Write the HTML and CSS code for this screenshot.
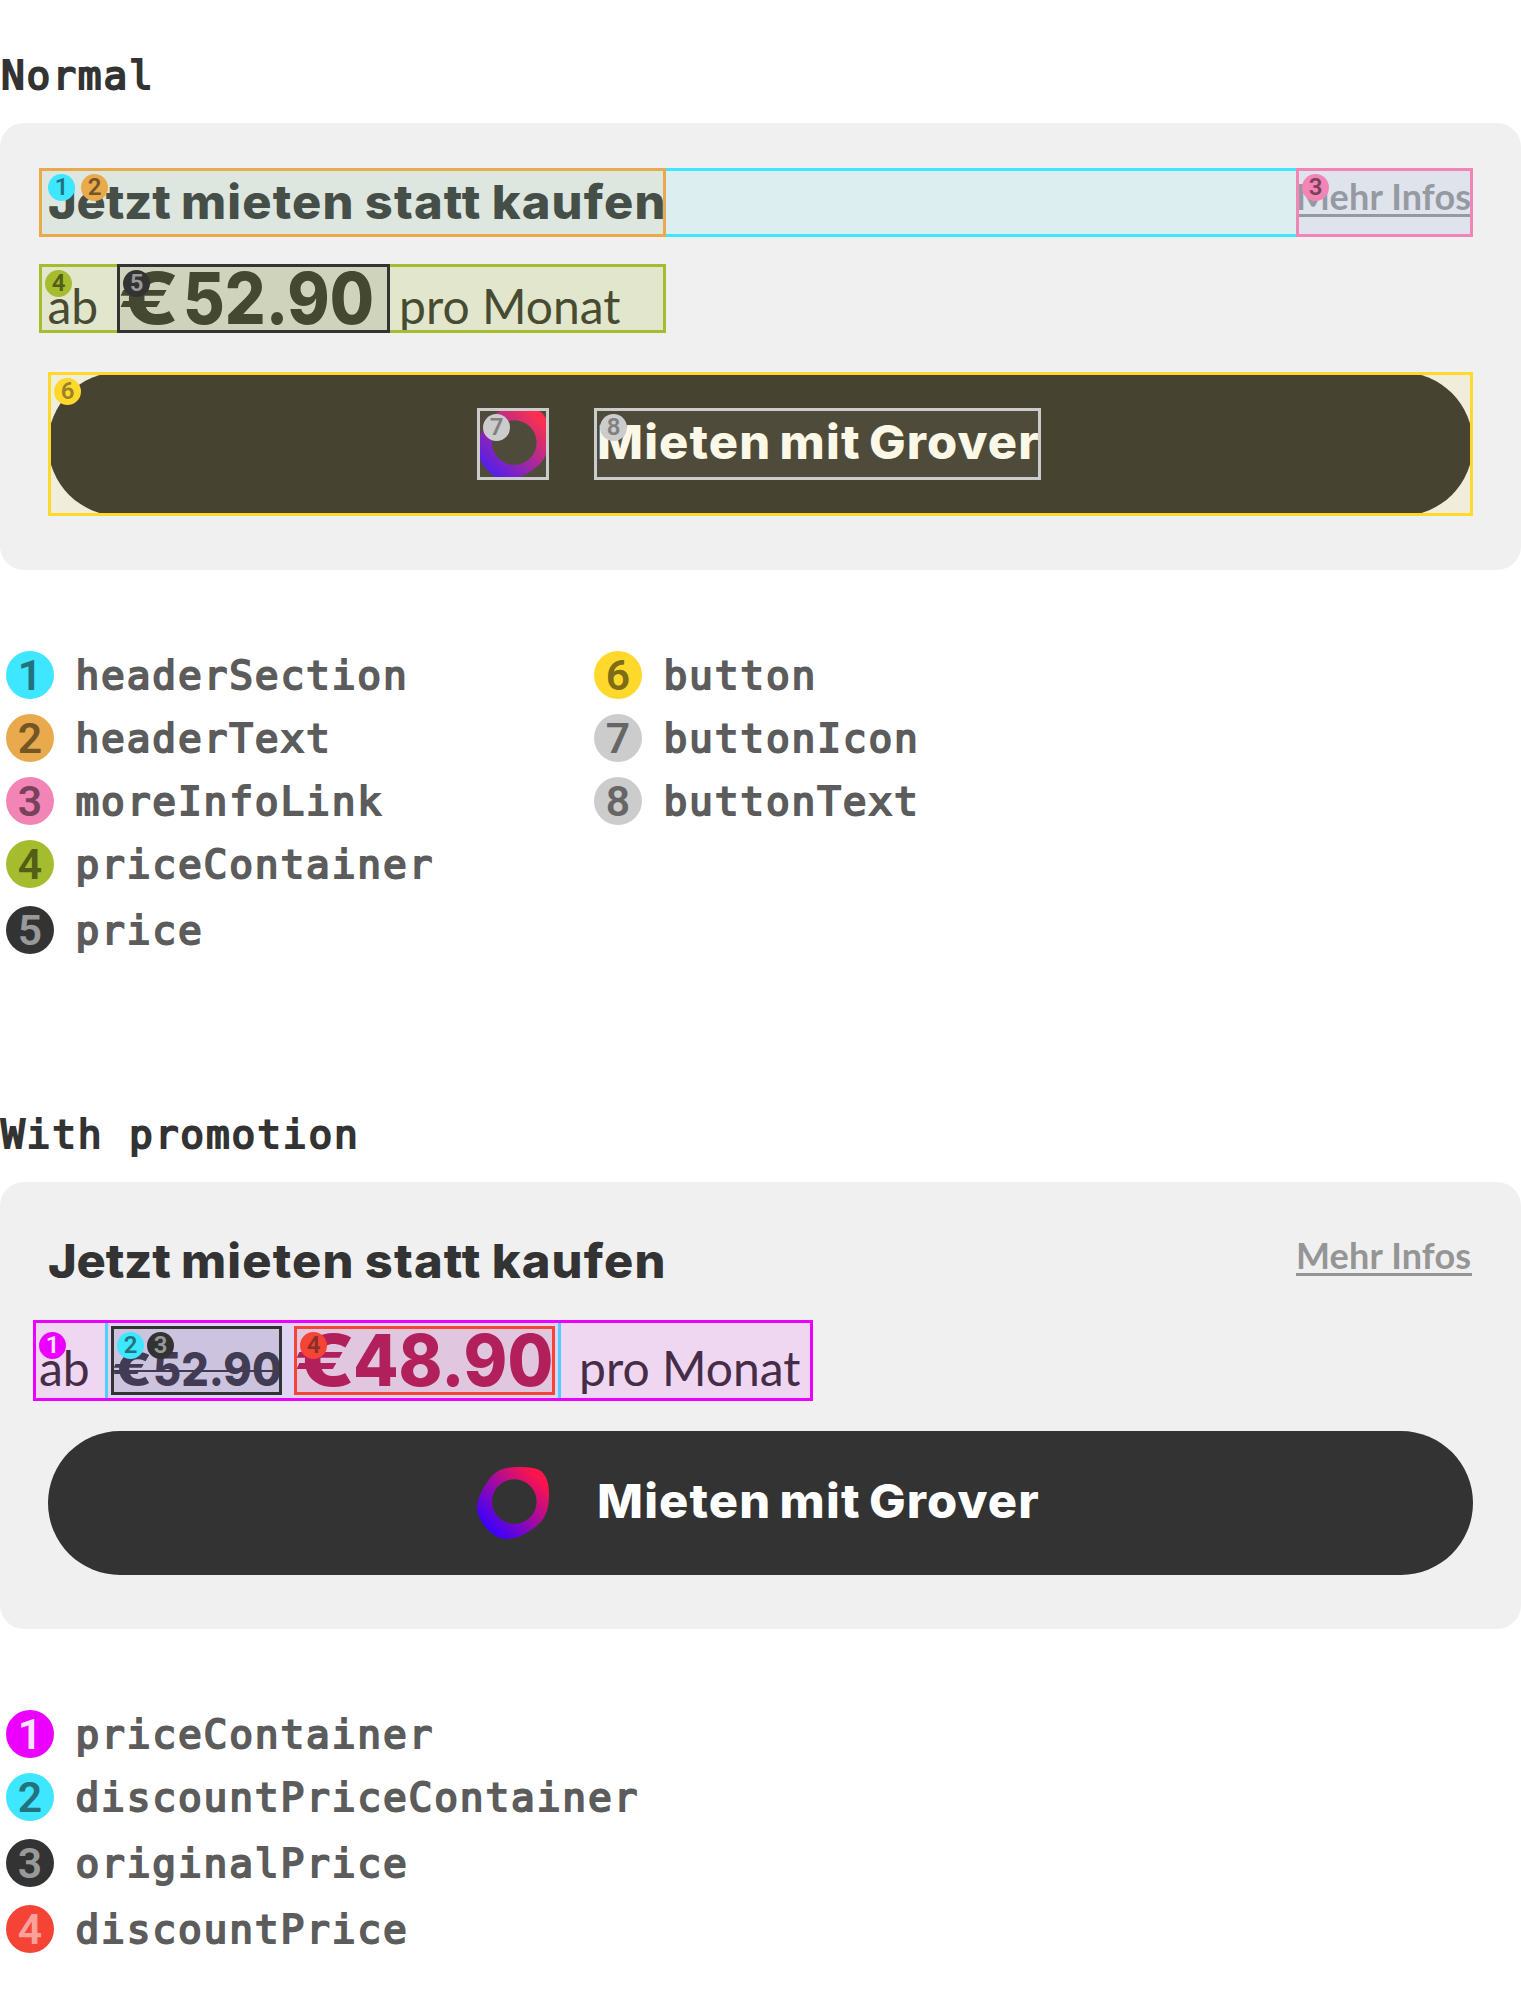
FILE: index.html
```html
<!DOCTYPE html>
<html lang="de">
<head>
<meta charset="utf-8">
<title>Grover widget</title>
<link rel="stylesheet" href="styles.css">
</head>
<body>
<svg class="defs" aria-hidden="true">
  <defs>
    <linearGradient id="ring" gradientUnits="userSpaceOnUse" x1="12" y1="62" x2="62" y2="10">
      <stop offset="0" stop-color="#3c00ff"/>
      <stop offset="1" stop-color="#ff144b"/>
    </linearGradient>
    <symbol id="logo" viewBox="0 0 72 72">
      <path fill="url(#ring)" fill-rule="evenodd" d="M42 0C53 0 60 1 64.500 4.500C70 9 72 18 72 27C72 38 70.500 46 65 53.500C58 62 43 72 30 72C19 72 11 64 5.500 56C1.500 50 0 46 0 40.500C0 33 4 25 8.500 17.500C17 4 24 0 42 0ZM37.300 12.300a22.300 22.300 0 1 0 0 44.600a22.300 22.300 0 1 0 0-44.600Z"/>
    </symbol>
  </defs>
</svg>

<section class="variant">
  <h2 class="title">Normal</h2>
  <div class="card">
    <div class="header">
      <div class="header-text"><span class="heading"><span class="tight">Jetzt</span> mieten statt kaufen</span><i class="mark orange over"></i><b class="badge orange second">2</b></div>
      <div class="more"><a class="more-link">Mehr Infos</a><i class="mark pink over"></i><b class="badge pink">3</b></div>
      <i class="mark cyan"></i><b class="badge cyan header-badge">1</b>
    </div>
    <div class="price-row">
      <span class="prefix">ab</span>
      <div class="price-box"><span class="price"><span class="euro">€</span><span class="amount">52.90</span></span><i class="mark dark over"></i><b class="badge dark">5</b></div>
      <span class="suffix">pro Monat</span>
      <i class="mark green"></i><b class="badge green">4</b>
    </div>
    <div class="button">
      <div class="button-icon"><svg class="logo"><use href="#logo"/></svg><i class="mark grey over"></i><b class="badge grey">7</b></div>
      <div class="button-text"><span class="label">Mieten mit Grover</span><i class="mark grey over"></i><b class="badge grey">8</b></div>
      <i class="mark yellow"></i><b class="badge yellow">6</b>
    </div>
  </div>
  <div class="legend">
    <ul class="keys">
      <li class="key"><b class="dot cyan">1</b><span class="name">headerSection</span></li>
      <li class="key"><b class="dot orange">2</b><span class="name">headerText</span></li>
      <li class="key"><b class="dot pink">3</b><span class="name">moreInfoLink</span></li>
      <li class="key"><b class="dot green">4</b><span class="name">priceContainer</span></li>
      <li class="key loose"><b class="dot dark">5</b><span class="name">price</span></li>
    </ul>
    <ul class="keys">
      <li class="key"><b class="dot yellow">6</b><span class="name">button</span></li>
      <li class="key"><b class="dot grey">7</b><span class="name">buttonIcon</span></li>
      <li class="key"><b class="dot grey">8</b><span class="name">buttonText</span></li>
    </ul>
  </div>
</section>

<section class="variant">
  <h2 class="title">With promotion</h2>
  <div class="card">
    <div class="header">
      <div class="header-text"><span class="heading"><span class="tight">Jetzt</span> mieten statt kaufen</span></div>
      <div class="more"><a class="more-link">Mehr Infos</a></div>
    </div>
    <div class="price-row promo">
      <span class="prefix">ab</span>
      <div class="discount">
        <div class="original-box"><span class="original"><span class="euro">€</span><span class="amount">52.90</span></span><i class="mark dark top"></i><b class="badge dark shifted">3</b></div>
        <div class="discount-box"><span class="price reduced"><span class="euro">€</span><span class="amount">48.90</span></span><i class="mark red top"></i><b class="badge red">4</b></div>
        <i class="mark cyan"></i><b class="badge cyan inner">2</b>
      </div>
      <span class="suffix">pro Monat</span>
      <i class="mark magenta over"></i><b class="badge magenta inner-left">1</b>
    </div>
    <div class="button">
      <div class="button-icon"><svg class="logo"><use href="#logo"/></svg></div>
      <div class="button-text"><span class="label">Mieten mit Grover</span></div>
    </div>
  </div>
  <div class="legend">
    <ul class="keys">
      <li class="key"><b class="dot magenta">1</b><span class="name">priceContainer</span></li>
      <li class="key"><b class="dot cyan">2</b><span class="name">discountPriceContainer</span></li>
      <li class="key loose"><b class="dot dark">3</b><span class="name">originalPrice</span></li>
      <li class="key loose"><b class="dot red">4</b><span class="name">discountPrice</span></li>
    </ul>
  </div>
</section>
</body>
</html>
```
FILE: styles.css
```css
* { box-sizing: border-box; }
body { margin: 0; background: #fff; color: #333; font-family: Lato, sans-serif; }
.defs { position: absolute; width: 0; height: 0; }
.variant { height: 1059px; }
.variant:last-child { height: 957px; overflow: hidden; }

.title, .name {
  margin: 0;
  font: 400 39.5px/46px "DejaVu Sans Mono", monospace;
  letter-spacing: 1.84px;
  -webkit-text-stroke: 2px currentColor;
  white-space: pre;
}
.title { padding: 52px 0 25px 1px; }

/* Widget card */
.card { height: 447px; padding: 45px 48px 0 39px; border-radius: 24px; background: #f0f0f0; }
.header { position: relative; display: flex; justify-content: space-between; height: 69px; }
.header-text { position: relative; width: 627px; padding-left: 9px; }
.heading, .label, .price, .original { display: block; font-family: Inter, sans-serif; white-space: nowrap; }
.heading, .label {
  font-size: 47px; font-weight: 800; letter-spacing: 1.1px; word-spacing: -3.5px;
  transform: scaleX(1.038); transform-origin: left;
}
.heading { line-height: 67px; word-spacing: -1.5px; }
.tight { letter-spacing: -.2px; }
.more { position: relative; width: 177px; }
.more-link {
  display: block; width: 176px; height: 49px; border-bottom: 3px solid #959595;
  color: #959595; font-size: 36px; font-weight: 700; line-height: 56px; letter-spacing: .15px; white-space: nowrap;
}

.price-row { position: relative; display: flex; width: 627px; height: 69px; margin-top: 27px; }
.prefix { width: 78px; padding-left: 8.500px; }
.prefix, .suffix { font-size: 48px; line-height: 83px; white-space: nowrap; }
.price-box { position: relative; width: 273px; padding-left: 1px; }
.price { font-size: 72px; font-weight: 800; line-height: 68px; }
.suffix { padding-left: 9px; }
.euro, .amount { display: inline-block; transform-origin: left; }
.euro { transform: scaleX(1.24); }
.amount { margin-left: 15px; transform: scaleX(.89); }

.promo { width: 780px; height: 81px; margin: 24px 0 0 -6px; }
.promo .prefix { width: 72px; padding-left: 6px; }
.promo .prefix, .promo .suffix { line-height: 95px; }
.promo .suffix { padding-left: 18px; }
.discount { position: relative; display: flex; gap: 12px; width: 456px; padding: 6px; }
.original-box { position: relative; width: 171px; padding-left: 1px; }
.discount-box { position: relative; width: 261px; padding-left: 0; }
.original { position: relative; width: 165px; font-size: 47px; font-weight: 800; line-height: 86px; }
.original::after { content: ""; position: absolute; left: 2px; right: 1px; top: 44px; height: 2px; background: #333; }
.original .amount { margin-left: 8px; transform: scaleX(.92); }
.reduced { color: #b00b3a; }
.reduced .amount { margin-left: 9px; transform: scaleX(.92); }

.button {
  position: relative; display: flex; gap: 45px; width: 1425px; height: 144px;
  margin: 39px 0 0 9px; padding: 36px 0 36px 429px; border-radius: 72px; background: #333;
}
.promo + .button { margin-top: 30px; }
.button-icon { position: relative; width: 72px; height: 72px; }
.logo { display: block; width: 72px; height: 72px; }
.button-text { position: relative; width: 447px; padding-left: 3px; }
.label { color: #fff; line-height: 68px; }

/* Annotation frames laid over the widget */
.mark { position: absolute; inset: 0; z-index: 1; border: 3px solid var(--c); }
.mark::before { content: ""; position: absolute; inset: 0; background: var(--c); opacity: var(--o, .1); }
.mark.over { z-index: 2; }
.mark.top { z-index: 3; }
.badge {
  position: absolute; left: 6px; top: 6px; z-index: 4; width: 27px; height: 27px; border-radius: 50%;
  background: var(--c); color: var(--t); font: 600 24px/27px Roboto, sans-serif; text-align: center;
}
.header-badge { left: 9px; }
.second { left: 42px; }
.shifted { left: 36px; }
.inner { left: 12px; top: 12px; }
.inner-left { top: 12px; }

.cyan { --c: #3ee6ff; --t: #23737f; }
.orange { --c: #e8aa4c; --t: #745526; }
.pink { --c: #f285b6; --t: #79425b; }
.green { --c: #a6bc2f; --t: #535e17; }
.dark { --c: #333; --t: #999; }
.yellow { --c: #ffd82c; --t: #7f6c16; }
.grey { --c: #ccc; --t: #666; }
.magenta { --c: #eb00ff; --t: #fbe0ff; }
.red { --c: #f54336; --t: #faa19b; }
.mark.green { --o: .18; }
.mark.grey { --o: .06; }
.badge.grey { --t: #808080; }
.badge.yellow { --t: #99822a; }
.badge.red { --t: #8a3029; }

/* Legend */
.legend { display: flex; padding-top: 81px; }
.keys { width: 588px; margin: 0; padding: 0 0 0 6px; list-style: none; }
.key { display: flex; gap: 21.500px; height: 48px; margin-bottom: 15px; }
.key.loose { margin-top: 18px; }
.dot {
  flex: none; width: 48px; height: 48px; border-radius: 50%; background: var(--c); color: var(--t);
  font: 600 42.67px/48px Roboto, sans-serif; text-align: center;
}
.name { padding-top: 1px; color: #5c5c5c; }
```
